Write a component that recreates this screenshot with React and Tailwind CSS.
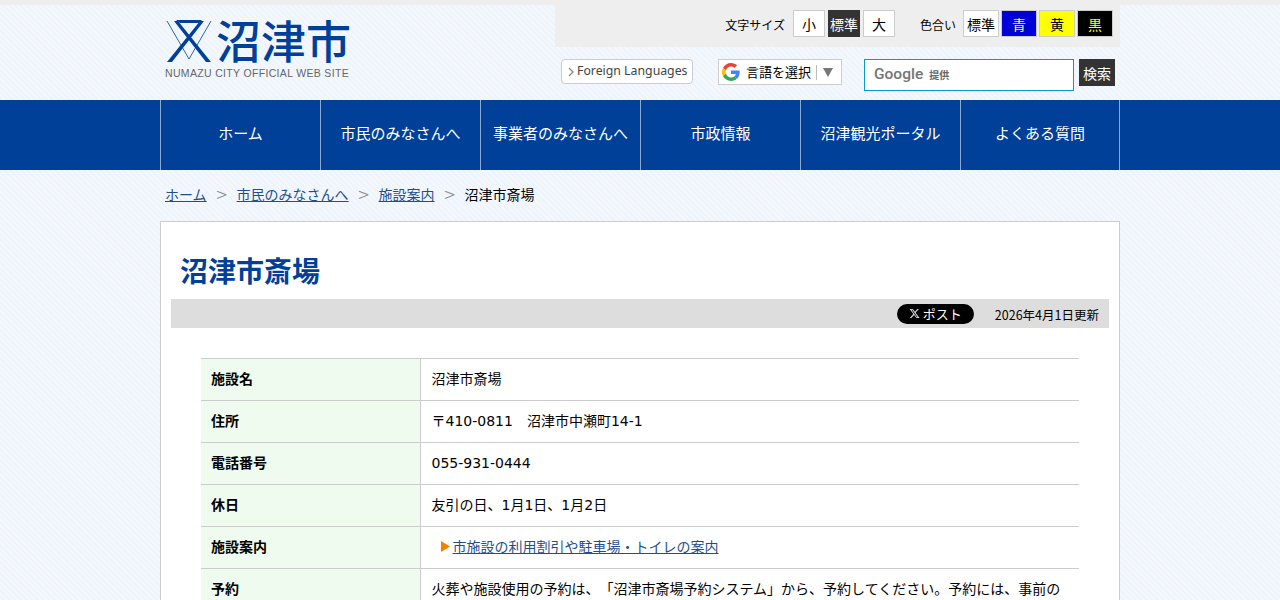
import React from "react";

const nav = ["ホーム", "市民のみなさんへ", "事業者のみなさんへ", "市政情報", "沼津観光ポータル", "よくある質問"];

const rows = [
  ["施設名", "沼津市斎場"],
  ["住所", "〒410-0811　沼津市中瀬町14-1"],
  ["電話番号", "055-931-0444"],
  ["休日", "友引の日、1月1日、1月2日"],
];

function Emblem() {
  return (
    <svg width="46" height="44" viewBox="6 5 46 44" fill="none">
      <path d="M16 6h26l-3 3H20z" fill="#004098" />
      <path d="M18 7l33 41h-5L14 7z" fill="#004098" />
      <path d="M40 7L7 48h5L44 7z" fill="#004098" />
      <path d="M7 7l22 38L51 7" stroke="#004098" strokeWidth="0.8" />
    </svg>
  );
}

function GoogleG() {
  return (
    <svg width="18" height="18" viewBox="0 0 48 48">
      <path fill="#EA4335" d="M24 9.500c3.500 0 6.700 1.200 9.200 3.600l6.900-6.900C35.900 2.400 30.500 0 24 0 14.600 0 6.500 5.400 2.600 13.200l8 6.200C12.500 13.600 17.800 9.500 24 9.500z" />
      <path fill="#4285F4" d="M47 24.500c0-1.600-.1-3.100-.4-4.500H24v9h12.900c-.6 3-2.200 5.500-4.700 7.200l7.700 6C44.400 38 47 31.800 47 24.500z" />
      <path fill="#FBBC05" d="M10.600 28.600c-.5-1.400-.8-3-.8-4.600s.3-3.200.8-4.600l-8-6.200C.9 16.500 0 20.100 0 24s.9 7.500 2.600 10.800l8-6.200z" />
      <path fill="#34A853" d="M24 48c6.500 0 11.900-2.100 15.900-5.800l-7.700-6c-2.200 1.400-4.900 2.300-8.200 2.300-6.200 0-11.500-4.100-13.400-9.900l-8 6.200C6.500 42.600 14.600 48 24 48z" />
    </svg>
  );
}

function Sep() {
  return <span className="mx-[9px] w-[12px] text-center text-[20px] font-light leading-none text-[#888]">&gt;</span>;
}

function Th({ children }) {
  return <th className="w-[219px] border-r border-t border-[#ccc] bg-[#f0fbf0] pb-[2px] pl-[10px] text-left text-sm font-bold text-black">{children}</th>;
}

export default function App() {
  return (
    <div className="h-[600px] overflow-hidden bg-[#f2f7fd] bg-[repeating-linear-gradient(45deg,#f4f8fd_0px,#f4f8fd_2px,#eef4fb_2px,#eef4fb_4px)] font-['Noto_Sans_CJK_JP','Liberation_Sans',sans-serif] text-sm text-black [text-spacing-trim:space-all]">
      <div className="h-[5px] bg-[#eee]" />
      <header className="mx-auto flex h-[95px] w-[960px] justify-between">
        <div className="pl-[5px] pt-[13px]">
          <div className="flex h-[45px] items-center gap-[4px] pl-[1px]">
            <Emblem />
            <span className="-mt-[2px] text-[45px] font-medium leading-[44px] text-[#004098]">沼津市</span>
          </div>
          <div className="mt-[3px] font-['Liberation_Sans',sans-serif] text-[10.500px] leading-[14px] tracking-[0.33px] text-[#666]">NUMAZU CITY OFFICIAL WEB SITE</div>
        </div>
        <div className="w-[565px]">
          <div className="-mt-[5px] flex h-[47px] items-center justify-end bg-[#eee] pr-[7px]">
            <span className="mr-[8px] pt-[2px] text-xs">文字サイズ</span>
            <span className="flex h-[27px] w-[32px] items-center justify-center border border-[#ccc] bg-white">小</span>
            <span className="ml-[3px] flex h-[27px] w-[32px] items-center justify-center bg-[#333] text-white">標準</span>
            <span className="ml-[3px] flex h-[27px] w-[32px] items-center justify-center border border-[#ccc] bg-white">大</span>
            <span className="ml-[25px] mr-[7px] pt-[2px] text-xs">色合い</span>
            <span className="flex h-[27px] w-[36px] items-center justify-center border border-[#ccc] bg-white">標準</span>
            <span className="ml-[2px] flex h-[27px] w-[36px] items-center justify-center border border-[#ccc] bg-[#0000d8] text-[#ffff00]">青</span>
            <span className="ml-[2px] flex h-[27px] w-[36px] items-center justify-center border border-[#ccc] bg-[#ffff00]">黄</span>
            <span className="ml-[2px] flex h-[27px] w-[36px] items-center justify-center border border-[#ccc] bg-black text-[#ffff00]">黒</span>
          </div>
          <div className="flex pl-[6px] pt-[12px]">
            <div className="flex h-[25px] w-[132px] items-center rounded-[4px] border border-[#ccc] bg-white pl-[6px] leading-none text-[#444]">
              <svg width="6" height="10" viewBox="0 0 6 10" fill="none" className="mr-[3px]"><path d="M1 1l4 4-4 4" stroke="#888" strokeWidth="1.300" /></svg>
              <span className="whitespace-nowrap font-['Noto_Sans',sans-serif] text-[12.300px]">Foreign Languages</span>
            </div>
            <div className="ml-[25px] flex h-[26px] w-[124px] items-center border border-[#ccc] bg-white pl-[3px] text-[13px]">
              <GoogleG />
              <span className="ml-[6px]">言語を選択</span>
              <span className="ml-[5px] h-[15px] w-px bg-[#bbb]" />
              <svg width="10" height="9" viewBox="0 0 10 9" className="ml-[6px]"><path d="M0 0h10L5 9z" fill="#777" /></svg>
            </div>
            <div className="ml-[22px] flex h-[32px] w-[210px] items-center border border-[#0a9ac4] bg-white pl-[9px]">
              <span className="font-['Roboto',sans-serif] text-[15.500px] font-medium leading-none text-[#757575]">Google</span>
              <span className="ml-[6px] pt-[1px] text-[10px] font-bold text-[#666]">提供</span>
            </div>
            <div className="ml-[5px] flex h-[27px] w-[36px] items-center justify-center bg-[#333] text-[14px] text-white">検索</div>
          </div>
        </div>
      </header>

      <nav className="h-[70px] bg-[#004098]">
        <ul className="mx-auto flex h-[70px] w-[960px]">
          {nav.map((n) => (
            <li key={n} className="flex w-[160px] shrink-0 items-center justify-center border-l border-[#8fa8d0] pb-[4px] text-[15px] text-white last:border-r">{n}</li>
          ))}
        </ul>
      </nav>

      <main className="mx-auto w-[960px]">
        <div className="flex h-[51px] items-center pb-[3px] pl-[5px] text-sm">
          <a className="text-[#1f4f8f] underline">ホーム</a>
          <Sep />
          <a className="text-[#1f4f8f] underline">市民のみなさんへ</a>
          <Sep />
          <a className="text-[#1f4f8f] underline">施設案内</a>
          <Sep />
          <span>沼津市斎場</span>
        </div>
        <section className="border border-[#ccc] bg-white px-[10px] pb-8">
          <h1 className="pl-[9px] pt-[30px] text-[28px] font-bold leading-[36px] text-[#004098]">沼津市斎場</h1>
          <div className="mt-[11px] flex h-[29px] items-center justify-end bg-[#ddd] pr-[10px]">
            <span className="mr-[21px] flex h-[20px] w-[77px] items-center justify-center gap-[3px] rounded-full bg-black pb-[1px] text-[13px] leading-none text-white">
              <svg width="11" height="11" viewBox="0 0 24 24" fill="#ddd"><path d="M18.200 2h3.300l-7.200 8.300L23 22h-6.700l-5.200-6.800L5.100 22H1.800l7.700-8.800L1.400 2h6.900l4.700 6.200L18.200 2zm-1.200 18h1.800L7.100 3.900H5.100L17 20z" /></svg>
              ポスト
            </span>
            <span className="pt-[3px] text-[12.500px]">2026年4月1日更新</span>
          </div>
          <table className="ml-[30px] mt-[30px] w-[878px] border-collapse font-['DejaVu_Sans','Noto_Sans_CJK_JP',sans-serif]">
            <tbody>
              {rows.map(([k, v]) => (
                <tr key={k} className="h-[42px]">
                  <Th>{k}</Th>
                  <td className="border-t border-[#ccc] pb-[2px] pl-[11px] text-sm">{v}</td>
                </tr>
              ))}
              <tr className="h-[42px]">
                <Th>施設案内</Th>
                <td className="border-t border-[#ccc] pb-[2px] pl-[20px] text-sm">
                  <span className="flex items-center gap-[3px]">
                    <svg width="9" height="11" viewBox="0 0 9 11"><path d="M0 0l9 5.500L0 11z" fill="#f58000" /></svg>
                    <a className="text-[#1f4f8f] underline">市施設の利用割引や駐車場・トイレの案内</a>
                  </span>
                </td>
              </tr>
              <tr>
                <Th>予約</Th>
                <td className="border-t border-[#ccc] px-[11px] pb-[10px] pt-[10px] text-sm leading-[21px]">
                  火葬や施設使用の予約は、「沼津市斎場予約システム」から、予約してください。予約には、事前の
                </td>
              </tr>
            </tbody>
          </table>
        </section>
      </main>
    </div>
  );
}
